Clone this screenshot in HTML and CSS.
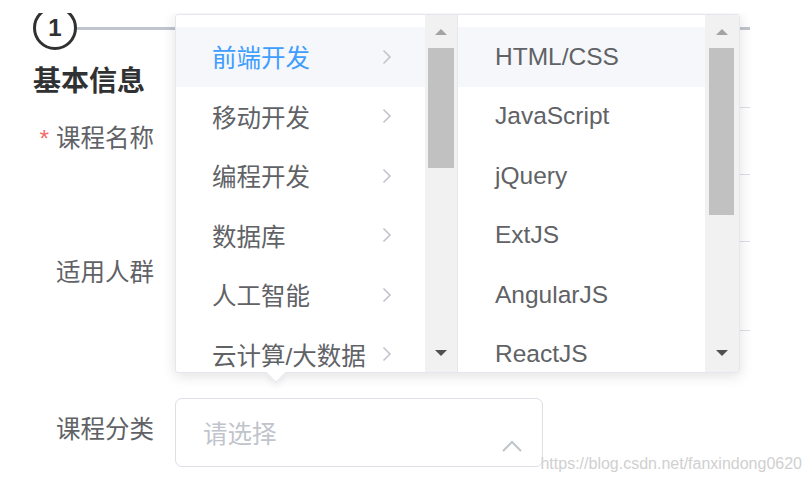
FILE: index.html
```html
<!DOCTYPE html>
<html lang="zh-CN">
  <head>
    <meta charset="UTF-8" />
    <meta name="viewport" content="width=device-width, initial-scale=1.0" />
    <title>课程信息</title>
    <link rel="stylesheet" href="styles.css">
  </head>
  <body>
    <div class="page">
      <div class="steps">
        <div class="step-icon">1</div>
        <div class="step-line"></div>
      </div>

      <h3 class="title">基本信息</h3>

      <div class="form-row">
        <label class="label"><span class="req">*</span>课程名称</label>
        <div class="input wide"></div>
      </div>

      <div class="form-row row-gap">
        <label class="label">适用人群</label>
        <div class="textarea wide"></div>
      </div>

      <div class="form-row row-gap">
        <label class="label">课程分类</label>
        <div class="select">
          <span class="placeholder">请选择</span>
          <svg class="select-arrow" width="20" height="12" viewBox="0 0 20 12">
            <polyline points="1,11 10,2 19,11" fill="none" stroke="#c0c4cc" stroke-width="2" />
          </svg>
        </div>
      </div>

      <!-- cascader dropdown, opened above the select -->
      <div class="cascader">
        <div class="menu menu1">
          <ul class="menu-list">
            <li class="item active hover">前端开发<svg class="chev" width="10" height="16" viewBox="0 0 10 16"><polyline points="1.5,1.5 8,8 1.5,14.5" /></svg></li>
            <li class="item">移动开发<svg class="chev" width="10" height="16" viewBox="0 0 10 16"><polyline points="1.5,1.5 8,8 1.5,14.5" /></svg></li>
            <li class="item">编程开发<svg class="chev" width="10" height="16" viewBox="0 0 10 16"><polyline points="1.5,1.5 8,8 1.5,14.5" /></svg></li>
            <li class="item">数据库<svg class="chev" width="10" height="16" viewBox="0 0 10 16"><polyline points="1.5,1.5 8,8 1.5,14.5" /></svg></li>
            <li class="item">人工智能<svg class="chev" width="10" height="16" viewBox="0 0 10 16"><polyline points="1.5,1.5 8,8 1.5,14.5" /></svg></li>
            <li class="item">云计算/大数据<svg class="chev" width="10" height="16" viewBox="0 0 10 16"><polyline points="1.5,1.5 8,8 1.5,14.5" /></svg></li>
          </ul>
          <div class="scrollbar">
            <div class="sb-btn"><span class="tri-up"></span></div>
            <div class="thumb thumb1"></div>
            <div class="sb-btn sb-down"><span class="tri-down"></span></div>
          </div>
        </div>
        <div class="menu menu2">
          <ul class="menu-list">
            <li class="item hover">HTML/CSS</li>
            <li class="item">JavaScript</li>
            <li class="item">jQuery</li>
            <li class="item">ExtJS</li>
            <li class="item">AngularJS</li>
            <li class="item">ReactJS</li>
          </ul>
          <div class="scrollbar sb2">
            <div class="sb-btn"><span class="tri-up"></span></div>
            <div class="thumb thumb2"></div>
            <div class="sb-btn sb-down"><span class="tri-down"></span></div>
          </div>
        </div>
        <div class="popper-arrow"></div>
      </div>
    </div>

    <div class="watermark">https://blog.csdn.net/fanxindong0620</div>
  </body>
</html>
```

FILE: styles.css
```css
* {
  margin: 0;
  padding: 0;
  box-sizing: border-box;
}

body {
  padding-top: 13px;
  height: 483px;
  background: #fff;
  font-family: "Liberation Sans", "Noto Sans CJK SC", sans-serif;
  color: #606266;
  position: relative;
  overflow: hidden;
}

.page {
  position: relative;
  overflow: hidden;
  height: 470px;
}

.steps {
  display: flex;
  align-items: center;
  margin-top: -7px;
  padding-left: 33px;
  height: 44px;
}

.step-icon {
  width: 44px;
  height: 44px;
  border: 3px solid #303133;
  border-radius: 50%;
  display: flex;
  align-items: center;
  justify-content: center;
  font-size: 24px;
  font-weight: bold;
  color: #303133;
}

.step-line {
  width: 673px;
  height: 3px;
  background: #c0c4cc;
}

.title {
  margin: 12px 0 0 33px;
  font-size: 28px;
  line-height: 40px;
  font-weight: bold;
  color: #303133;
}

.form-row {
  display: flex;
  margin-top: 5px;
}

.row-gap {
  margin-top: 66px;
}

.row-gap + .row-gap {
  margin-top: 67px;
}

.label {
  width: 175px;
  padding-right: 21px;
  text-align: right;
  font-size: 24.5px;
  line-height: 64px;
  color: #606266;
}

.req {
  color: #f56c6c;
  margin-right: 7px;
}

.input {
  height: 68px;
}

.textarea {
  height: 90px;
}

.wide {
  width: 575px;
  border: 1px solid #dcdfe6;
  border-right: none;
  border-radius: 7px 0 0 7px;
}

.select {
  width: 368px;
  height: 69px;
  border: 1px solid #dcdfe6;
  border-radius: 7px;
  display: flex;
  align-items: center;
}

.placeholder {
  flex: 1;
  padding-left: 27px;
  font-size: 24.5px;
  color: #c0c4cc;
}

.select-arrow {
  align-self: flex-end;
  margin: 0 20px 14px 0;
}

.cascader {
  position: absolute;
  left: 175px;
  top: 1px;
  width: 565px;
  height: 359px;
  border: 1px solid #e4e7ed;
  border-radius: 3px;
  background: #fff;
  box-shadow: 0 3px 14px rgba(0, 0, 0, 0.12);
  display: flex;
}

.menu {
  display: flex;
  overflow: hidden;
}

.menu1 {
  width: 282px;
  border-right: 1px solid #e4e7ed;
}

.menu2 {
  flex: 1;
}

.menu-list {
  flex: 1;
  list-style: none;
  padding-top: 12px;
}

.item {
  height: 59.5px;
  display: flex;
  align-items: center;
  justify-content: space-between;
  padding: 0 33px 0 36px;
  font-size: 24.5px;
  color: #606266;
  white-space: nowrap;
}

.menu2 .item {
  padding-left: 37px;
}

.hover {
  background: #f5f7fa;
}

.active {
  color: #409eff;
}

.chev polyline {
  fill: none;
  stroke: #c0c4cc;
  stroke-width: 1.6;
}

.scrollbar {
  width: 32px;
  background: #f1f1f1;
  display: flex;
  flex-direction: column;
}

.sb2 {
  width: 34px;
}

.sb-btn {
  height: 33px;
  display: flex;
  align-items: center;
  justify-content: center;
}

.sb-down {
  margin-top: auto;
  height: 38px;
}

.tri-up {
  border-left: 6px solid transparent;
  border-right: 6px solid transparent;
  border-bottom: 6px solid #a3a3a3;
}

.tri-down {
  border-left: 6px solid transparent;
  border-right: 6px solid transparent;
  border-top: 6px solid #505050;
}

.thumb {
  background: #c1c1c1;
  margin: 0 3px;
}

.thumb1 {
  height: 120px;
}

.thumb2 {
  height: 167px;
  margin: 0 5px 0 4px;
}

.popper-arrow {
  position: absolute;
  left: 93px;
  bottom: -8px;
  width: 14px;
  height: 14px;
  background: #fff;
  border-right: 1px solid #e4e7ed;
  border-bottom: 1px solid #e4e7ed;
  transform: rotate(45deg);
  box-shadow: 3px 3px 6px rgba(0, 0, 0, 0.05);
}

.watermark {
  position: absolute;
  right: 10px;
  top: 455px;
  font-size: 16px;
  color: #d0d0d0;
  font-family: "Liberation Sans", sans-serif;
}
```
